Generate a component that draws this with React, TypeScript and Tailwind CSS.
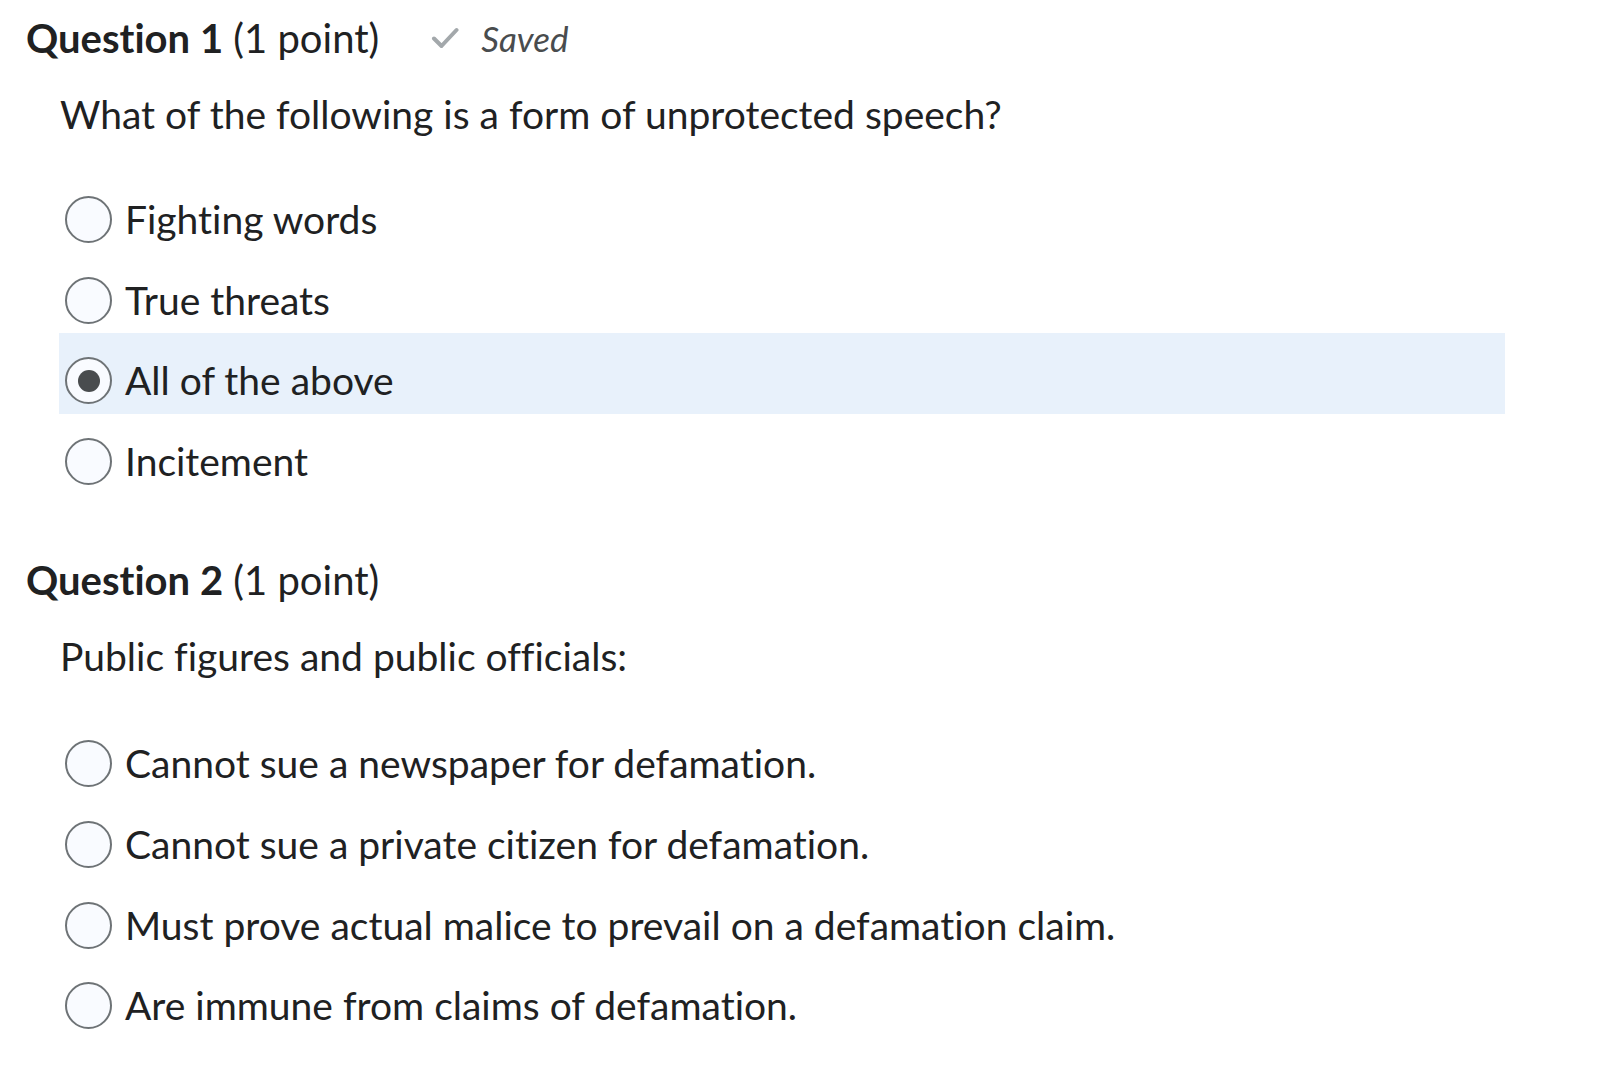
import React from "react";

type Question = {
  num: number;
  points: string;
  prompt: string;
  options: string[];
  selected?: number;
  saved?: boolean;
};

const questions: Question[] = [
  {
    num: 1,
    points: "(1 point)",
    prompt: "What of the following is a form of unprotected speech?",
    options: ["Fighting words", "True threats", "All of the above", "Incitement"],
    selected: 2,
    saved: true,
  },
  {
    num: 2,
    points: "(1 point)",
    prompt: "Public figures and public officials:",
    options: [
      "Cannot sue a newspaper for defamation.",
      "Cannot sue a private citizen for defamation.",
      "Must prove actual malice to prevail on a defamation claim.",
      "Are immune from claims of defamation.",
    ],
  },
];

function Radio({ checked }: { checked: boolean }) {
  return (
    <span className="flex h-[47px] w-[47px] shrink-0 items-center justify-center rounded-full border-2 border-[#6e7376] bg-[#f9fbff]">
      {checked && <span className="h-[22px] w-[22px] rounded-full bg-[#494c4e]" />}
    </span>
  );
}

function QuestionBlock({ q, optionsGap }: { q: Question; optionsGap: string }) {
  return (
    <section>
      <div className="flex h-[76px] items-center">
        <h2 className="text-[40px] text-[#202122]">
          <span className="font-bold">Question {q.num}</span> {q.points}
        </h2>
        {q.saved && (
          <div className="ml-[52px] flex items-center gap-[22px] text-[#494c4e]">
            <svg width="28" height="22" viewBox="0 0 28 22" fill="none">
              <path d="M3 11.5l7.5 7.5L25.5 3" stroke="#a3a8ab" strokeWidth="4" strokeLinecap="round" strokeLinejoin="round" />
            </svg>
            <span className="text-[35px] italic">Saved</span>
          </div>
        )}
      </div>
      <p className="mt-[16px] pl-[34px] text-[39px] leading-[44px] text-[#202122]">{q.prompt}</p>
      <div className={`${optionsGap} ml-[33px] w-[1446px]`}>
        {q.options.map((opt, i) => (
          <label
            key={opt}
            className={`flex h-[80.6px] items-start gap-[13px] pl-[6px] pt-[24px] ${
              q.selected === i ? "bg-[#e8f1fb]" : ""
            }`}
          >
            <Radio checked={q.selected === i} />
            <span className="text-[39px] leading-[47px] text-[#202122]">{opt}</span>
          </label>
        ))}
      </div>
    </section>
  );
}

export default function App() {
  return (
    <div className="min-h-screen bg-white pl-[26px] font-['Lato',sans-serif] [font-variant-ligatures:none]">
      <QuestionBlock q={questions[0]} optionsGap="mt-[36px]" />
      <div className="mt-[48px]">
        <QuestionBlock q={questions[1]} optionsGap="mt-[38px]" />
      </div>
    </div>
  );
}
